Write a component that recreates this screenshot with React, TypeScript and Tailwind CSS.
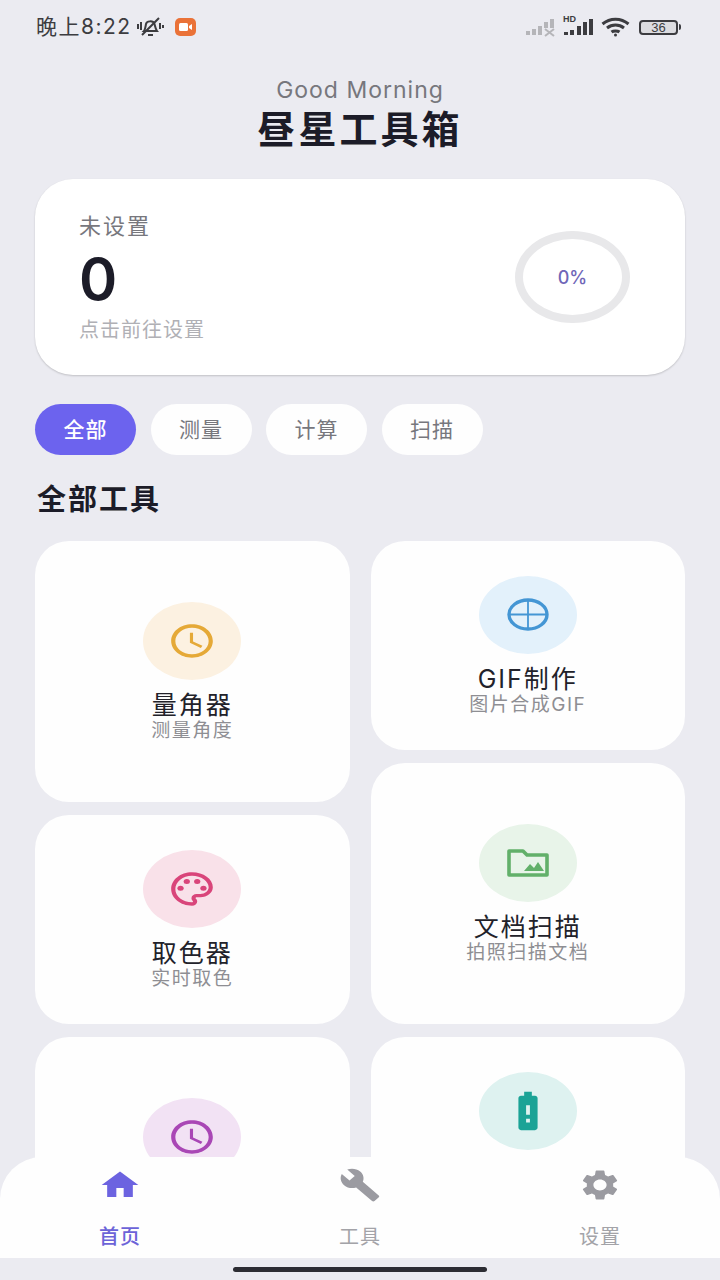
import React from 'react';
import { MdBatteryAlert, MdBuild, MdHome, MdOutlineAccessTime, MdOutlinePalette, MdSettings } from 'react-icons/md';

const sans = 'font-["Inter","Noto_Sans_CJK_SC",sans-serif]';

const GifGlyph = () => (
  <svg width="42" height="33" viewBox="0 0 42 33" fill="none" stroke="#4496d4">
    <ellipse cx="21" cy="16.5" rx="19" ry="14.5" strokeWidth="3.4" />
    <path d="M2 16.5H40M21 2V31" strokeWidth="1.8" />
  </svg>
);

const FolderGlyph = () => (
  <svg width="42" height="28" viewBox="0 0 42 28" fill="none">
    <path d="M2 2H16L20 6H40V26H2Z" stroke="#62b06a" strokeWidth="3.6" strokeLinejoin="round" />
    <path d="M17 22L23 15L27 19L31 13L37 22Z" fill="#62b06a" />
  </svg>
);

type Tool = {
  title: string;
  desc: string;
  tint: string;
  tall?: boolean;
  icon: React.ReactNode;
};

const LEFT_TOOLS: Tool[] = [
  {
    title: '量角器',
    desc: '测量角度',
    tint: 'bg-[#fcf1e1]',
    tall: true,
    icon: <MdOutlineAccessTime preserveAspectRatio="none" className="w-[50px] h-[40px] text-[#e5a937]" />,
  },
  {
    title: '取色器',
    desc: '实时取色',
    tint: 'bg-[#f9e1e9]',
    icon: <MdOutlinePalette preserveAspectRatio="none" className="w-[50px] h-[40px] text-[#d9457a]" />,
  },
  {
    title: '计时器',
    desc: '时间记录',
    tint: 'bg-[#f2e2f4]',
    tall: true,
    icon: <MdOutlineAccessTime preserveAspectRatio="none" className="w-[50px] h-[40px] text-[#a947b5]" />,
  },
];

const RIGHT_TOOLS: Tool[] = [
  { title: 'GIF制作', desc: '图片合成GIF', tint: 'bg-[#e3f1fb]', icon: <GifGlyph /> },
  { title: '文档扫描', desc: '拍照扫描文档', tint: 'bg-[#e8f4e9]', tall: true, icon: <FolderGlyph /> },
  {
    title: '电池信息',
    desc: '查看电池状态',
    tint: 'bg-[#def2f0]',
    icon: <MdBatteryAlert preserveAspectRatio="none" className="w-[46px] h-[46px] text-[#1ba396]" />,
  },
];

const ToolCard = ({ tool }: { tool: Tool }) => (
  <div
    className={`flex flex-col items-center justify-center rounded-[34px] bg-[#fefefe] ${tool.tall ? 'h-[261px]' : 'h-[209px]'}`}
  >
    <div className={`flex items-center justify-center w-[98px] h-[78px] rounded-[50%] ${tool.tint}`}>{tool.icon}</div>
    <div className="mt-[10px] h-[30px] leading-[30px] text-[25px] tracking-[2px] text-[#22222a]">{tool.title}</div>
    <div className="h-[22px] leading-[22px] text-[19px] tracking-[1.500px] text-[#8e8e93]">{tool.desc}</div>
  </div>
);

const StatusBar = () => (
  <div className="flex items-center h-[54px] pl-[36px] pr-[39px] text-[#3c3c40]">
    <span className="text-[21px] tracking-[1.500px] leading-none -translate-y-px">晚上8:22</span>
    {/* muted bell */}
    <svg className="ml-[4px]" width="28" height="22" viewBox="0 0 28 22" fill="none" stroke="#3c3c40" strokeWidth="2">
      <path d="M8 15C9 14 9.500 11 10 8C10.500 5 17 4 18.500 8C19 10 19.500 13 21 15Z" />
      <path d="M6 19L23 2M12 19H17M2 8V13M5 6V14M24 7V13M27 9V12" />
    </svg>
    <div className="ml-[11px] flex items-center justify-center w-[21px] h-[18px] rounded-[5px] bg-[#ea7238]">
      <svg width="13" height="8" viewBox="0 0 13 8" fill="#fff">
        <rect width="9" height="8" rx="1.500" />
        <path d="M10 3L13 1V7L10 5Z" />
      </svg>
    </div>
    <div className="ml-auto flex items-center">
      <svg width="30" height="20" viewBox="0 0 30 20" fill="#b5b5b9">
        <rect x="0" y="14" width="4" height="4" />
        <rect x="6" y="12" width="4" height="6" />
        <rect x="12" y="9" width="4" height="9" />
        <rect x="18" y="5" width="4" height="6" />
        <rect x="24" y="2" width="4" height="9" />
        <path d="M19 12L28 19M28 12L19 19" stroke="#b5b5b9" strokeWidth="2" />
      </svg>
      <div className="relative ml-[7px] w-[30px] h-[20px]">
        <span className="absolute left-0 top-[-2px] text-[9px] font-bold leading-none font-['Liberation_Sans',sans-serif]">HD</span>
        <svg className="absolute left-0 top-0" width="30" height="20" viewBox="0 0 30 20" fill="#3c3c40">
          <rect x="1" y="15" width="4" height="3" />
          <rect x="7" y="13" width="4" height="5" />
          <rect x="14" y="9" width="4" height="9" />
          <rect x="20" y="5" width="4" height="13" />
          <rect x="26" y="2" width="4" height="16" />
        </svg>
      </div>
      <svg className="ml-[8px]" width="29" height="20" viewBox="0 0 29 20" fill="none" stroke="#3c3c40" strokeWidth="3">
        <path d="M1.500 7C9 0.500 20 0.500 27.500 7M6 11C11 7 18 7 23 11M10.500 15C12.500 13.500 16.500 13.500 18.500 15" />
        <circle cx="14.500" cy="18" r="1.500" fill="#3c3c40" stroke="none" />
      </svg>
      <div className="ml-[9px] flex items-center">
        <div className="flex items-center justify-center w-[39px] h-[15px] rounded-[4px] border-2 border-[#3c3c40] bg-[#dcdce0] text-[13px] leading-none font-['Liberation_Sans',sans-serif]">
          36
        </div>
        <div className="ml-[1px] w-[2px] h-[6px] rounded-r-sm bg-[#3c3c40]" />
      </div>
    </div>
  </div>
);

const NavItem = ({ label, active, icon }: { label: string; active?: boolean; icon: React.ReactNode }) => (
  <div className="flex flex-col items-center">
    <div className="flex items-center justify-center h-[40px] mt-[8px]">{icon}</div>
    <span
      className={`mt-[20px] text-[20px] leading-[24px] tracking-[1px] ${active ? 'font-medium text-[#6c63d8]' : 'text-[#a3a3a8]'}`}
    >
      {label}
    </span>
  </div>
);

const App: React.FC = () => {
  return (
    <div className={`relative h-[1280px] w-[720px] overflow-hidden bg-[#ebebf1] ${sans}`}>
      <StatusBar />

      {/* Header */}
      <div className="flex flex-col items-center mt-[24px]">
        <div className="text-[23px] leading-[24px] tracking-[1px] text-[#77777d]">Good Morning</div>
        <h1 className="mt-[4px] text-[38px] leading-[46px] tracking-[3px] font-bold text-[#1c1c28]">昼星工具箱</h1>
      </div>

      {/* Summary card */}
      <div className="mx-[35px] mt-[27px] flex items-center justify-between h-[196px] pl-[44px] pr-[55px] rounded-[38px] bg-white shadow-[0_1px_2px_rgba(0,0,0,0.18)]">
        <div>
          <div className="text-[22px] leading-[28px] tracking-[2px] text-[#77777d]">未设置</div>
          <div className="mt-[7px] text-[58px] leading-[64px] font-semibold text-[#1c1c28]">0</div>
          <div className="mt-[6px] text-[20px] leading-[26px] tracking-[1px] text-[#b0b0b5]">点击前往设置</div>
        </div>
        <div className="flex items-center justify-center w-[115px] h-[92px] rounded-[50%] border-[8px] border-[#e8e8ea] text-[18px] font-medium text-[#6f66b8]">
          0%
        </div>
      </div>

      {/* Filter chips */}
      <div className="mx-[35px] mt-[29px] flex gap-[14.500px]">
        {['全部', '测量', '计算', '扫描'].map((chip, idx) => (
          <div
            key={chip}
            className={`flex items-center justify-center w-[101px] h-[51px] rounded-full text-[21px] tracking-[1px] ${
              idx === 0 ? 'bg-[#6c63ee] font-medium text-white' : 'bg-[#fefefe] text-[#77777d]'
            }`}
          >
            {chip}
          </div>
        ))}
      </div>

      <h2 className="ml-[37px] mt-[27px] text-[29px] leading-[36px] tracking-[2px] font-semibold text-[#1c1c28]">全部工具</h2>

      {/* Tools, two staggered columns */}
      <div className="mx-[35px] mt-[23px] flex gap-[21px]">
        <div className="flex-1 flex flex-col gap-[13px]">
          {LEFT_TOOLS.map((tool) => (
            <ToolCard key={tool.title} tool={tool} />
          ))}
        </div>
        <div className="flex-1 flex flex-col gap-[13px]">
          {RIGHT_TOOLS.map((tool) => (
            <ToolCard key={tool.title} tool={tool} />
          ))}
        </div>
      </div>

      {/* Bottom navigation lies over the list */}
      <div className="absolute inset-x-0 bottom-0">
        <div className="grid grid-cols-3 h-[101px] rounded-t-[42px] bg-[#fefefe]">
          <NavItem label="首页" active icon={<MdHome preserveAspectRatio="none" className="w-[44px] h-[36px] text-[#6c63e0]" />} />
          <NavItem label="工具" icon={<MdBuild preserveAspectRatio="none" className="w-[42px] h-[36px] text-[#9b9ba1]" />} />
          <NavItem label="设置" icon={<MdSettings preserveAspectRatio="none" className="w-[44px] h-[36px] text-[#9b9ba1]" />} />
        </div>
        <div className="flex items-center justify-center h-[22px] bg-[#ebebf1]">
          <div className="w-[254px] h-[5px] rounded-full bg-[#2c2c33]" />
        </div>
      </div>
    </div>
  );
};

export default App;
